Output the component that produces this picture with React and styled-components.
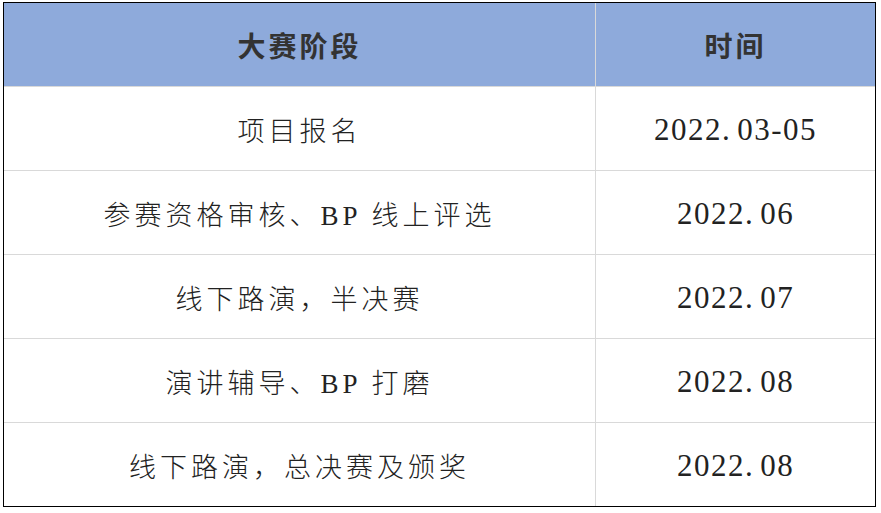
import React from "react";
import styled, { createGlobalStyle } from "styled-components";

const GlobalStyle = createGlobalStyle`
  html, body {
    margin: 0;
    padding: 0;
    background: #fff;
  }
`;

const stages = [
  { name: "项目报名", year: "2022", month: "03-05" },
  { name: "参赛资格审核、BP 线上评选", year: "2022", month: "06" },
  { name: "线下路演，半决赛", year: "2022", month: "07" },
  { name: "演讲辅导、BP 打磨", year: "2022", month: "08" },
  { name: "线下路演，总决赛及颁奖", year: "2022", month: "08" },
];

const App = () => {
  return (
    <>
      <GlobalStyle />
      <Page>
        <Table>
          <HeadCell>大赛阶段</HeadCell>
          <HeadCell>时间</HeadCell>
          {stages.map((item, i) => (
            <React.Fragment key={i}>
              <Cell>{item.name}</Cell>
              <Cell $date>
                {item.year}
                <Dot>.</Dot>
                {item.month}
              </Cell>
            </React.Fragment>
          ))}
        </Table>
      </Page>
    </>
  );
};

const Page = styled.div`
  padding: 2px 0 0 3px;
  width: 881px;
  height: 513px;
  box-sizing: border-box;
`;

const Table = styled.div`
  display: grid;
  grid-template-columns: 591px 279px;
  grid-template-rows: repeat(6, 83px);
  gap: 1px;
  background: #d9d9d9;
  border: 1px solid #000;
  width: max-content;
`;

const HeadCell = styled.div`
  display: flex;
  align-items: center;
  justify-content: center;
  background: #8eaadb;
  color: #333;
  font-family: "Noto Sans CJK SC", sans-serif;
  font-weight: 700;
  font-size: 28px;
  letter-spacing: 3px;
`;

const Cell = styled.div`
  display: flex;
  align-items: center;
  justify-content: center;
  background: #fff;
  color: #222;
  font-family: "Liberation Serif", "Noto Sans CJK SC", serif;
  font-weight: 300;
  font-size: ${(p) => (p.$date ? "31px" : "27px")};
  letter-spacing: ${(p) => (p.$date ? "1.5px" : "4px")};
  padding-top: 2px;
`;

const Dot = styled.span`
  margin-right: 6px;
`;

export default App;
